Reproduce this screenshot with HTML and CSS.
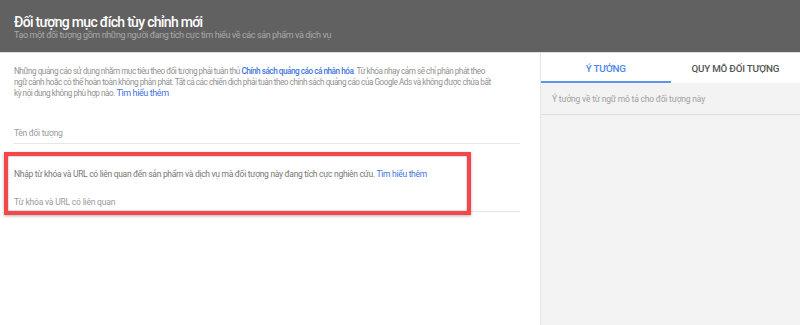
FILE: index.html
```html
<!DOCTYPE html>
<html lang="vi">
<head>
<meta charset="utf-8">
<link rel="stylesheet" href="styles.css">
</head>
<body>
<header class="header">
  <h1 class="title">Đối tượng mục đích tùy chỉnh mới</h1>
  <p class="subtitle">Tạo một đối tượng gồm những người đang tích cực tìm hiểu về các sản phẩm và dịch vụ</p>
</header>
<div class="main">
  <div class="left">
    <p class="notice">Những quảng cáo sử dụng nhằm mục tiêu theo đối tượng phải tuân thủ <a class="link strong">Chính sách quảng cáo cá nhân hóa</a>. Từ khóa nhạy cảm sẽ chỉ phân phát theo<br>ngữ cảnh hoặc có thể hoàn toàn không phân phát. Tất cả các chiến dịch phải tuân theo chính sách quảng cáo của Google Ads và không được chứa bất<br>kỳ nội dung không phù hợp nào. <a class="link big">Tìm hiểu thêm</a></p>
    <div class="field name-field">Tên đối tượng</div>
    <div class="kw-section">
      <p class="kw-help">Nhập từ khóa và URL có liên quan đến sản phẩm và dịch vụ mà đối tượng này đang tích cực nghiên cứu. <a class="link">Tìm hiểu thêm</a></p>
      <div class="field kw-field">Từ khóa và URL có liên quan</div>
      <div class="highlight"></div>
    </div>
  </div>
  <aside class="right">
    <div class="tabs">
      <div class="tab active">Ý TƯỞNG</div>
      <div class="tab">QUY MÔ ĐỐI TƯỢNG</div>
    </div>
    <div class="ideas">Ý tưởng về từ ngữ mô tả cho đối tượng này</div>
  </aside>
</div>
</body>
</html>
```

FILE: styles.css
```css
* { box-sizing: border-box; }
html, body { margin: 0; padding: 0; }
body {
  width: 800px;
  height: 325px;
  overflow: hidden;
  font-family: Roboto, "Noto Sans", Arial, sans-serif;
  background: #fff;
  color: #777;
}
.header {
  height: 53px;
  background: #616161;
  border-bottom: 1px solid #dcdcdc;
  padding: 14px 14px 0;
}
.title {
  margin: 0;
  font-size: 14px;
  line-height: 16px;
  font-weight: 500;
  letter-spacing: -0.7px;
  color: #fff;
}
.subtitle {
  margin: 0;
  font-size: 9px;
  line-height: 10px;
  letter-spacing: -0.4px;
  color: #a9a9a9;
}
.main {
  display: flex;
  height: 272px;
}
.left {
  width: 540px;
  padding: 13px 20px 0 14px;
}
.notice {
  margin: 0;
  font-size: 8.2px;
  line-height: 11px;
  letter-spacing: -0.48px;
  color: #919191;
}
.link { color: #3f73dd; }
.link.strong { font-weight: 500; }
.link.big { font-size: 9px; letter-spacing: -0.4px; }
.field {
  font-size: 8.5px;
  color: #9a9a9a;
  border-bottom: 1px solid #e6e6e6;
}
.name-field {
  margin-top: 28px;
  padding-bottom: 4px;
  line-height: 12px;
  letter-spacing: -0.3px;
}
.kw-section {
  position: relative;
  padding-top: 24px;
}
.kw-help {
  margin: 0;
  font-size: 8.5px;
  line-height: 12px;
  letter-spacing: -0.3px;
  color: #777;
}
.kw-field {
  margin-top: 16px;
  padding-bottom: 3px;
  line-height: 12px;
  letter-spacing: -0.2px;
}
.highlight {
  position: absolute;
  left: -10px;
  top: 8px;
  width: 467px;
  height: 63px;
  border: 4px solid #f4474a;
  box-shadow: 0 1px 3px rgba(0,0,0,0.3), inset 0 0 2px rgba(0,0,0,0.45);
}
.right {
  width: 260px;
  border-left: 1px solid #e6e6e6;
  background: #f3f3f3;
}
.tabs {
  display: flex;
  height: 30px;
  background: #fff;
}
.tab {
  flex: 1;
  display: flex;
  align-items: center;
  justify-content: center;
  font-size: 9.8px;
  font-weight: 500;
  letter-spacing: -0.2px;
  color: #555;
  padding-top: 1px;
}
.tab.active {
  color: #4d86e8;
  border-bottom: 2px solid #5f93ee;
  padding-top: 3px;
}
.ideas {
  height: 32px;
  padding: 10px 0 0 11px;
  font-size: 8.5px;
  line-height: 12px;
  letter-spacing: -0.2px;
  color: #a0a0a0;
  border-bottom: 1px solid #e0e0e0;
}
```
